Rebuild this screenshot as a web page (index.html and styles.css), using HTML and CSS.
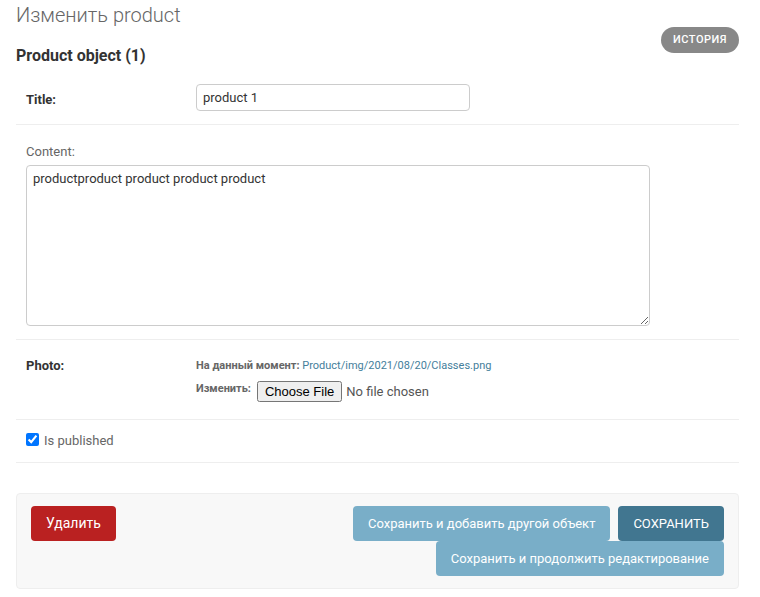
FILE: index.html
```html
<!DOCTYPE html>
<html lang="ru">
<head>
<meta charset="utf-8">
<title>Изменить product</title>
<link rel="stylesheet" href="styles.css">
</head>
<body>
<div class="page">
  <div class="header">
    <div class="titles">
      <h1 class="page-title">Изменить product</h1>
      <h2 class="object-title">Product object (1)</h2>
    </div>
    <a class="history" href="#">История</a>
  </div>

  <form class="change-form">
    <div class="form-row inline">
      <label class="field-label required" for="id_title">Title:</label>
      <input class="text-input" type="text" id="id_title" value="product 1">
    </div>

    <div class="form-row stacked">
      <label class="field-label stacked-label" for="id_content">Content:</label>
      <textarea class="textarea" id="id_content">productproduct product product product</textarea>
    </div>

    <div class="form-row inline">
      <label class="field-label required">Photo:</label>
      <div class="file-upload">
        <div class="file-current">На данный момент: <a class="file-link" href="#">Product/img/2021/08/20/Classes.png</a></div>
        <div class="file-change">
          <span class="file-change-label">Изменить:</span>
          <input class="file-input" type="file">
        </div>
      </div>
    </div>

    <div class="form-row check-row">
      <input class="checkbox" type="checkbox" id="id_pub" checked>
      <label class="check-label" for="id_pub">Is published</label>
    </div>

    <div class="submit-row">
      <a class="btn btn-delete" href="#">Удалить</a>
      <div class="save-buttons">
        <button class="btn btn-default" type="button">СОХРАНИТЬ</button>
        <button class="btn btn-light" type="button">Сохранить и добавить другой объект</button>
        <button class="btn btn-light" type="button">Сохранить и продолжить редактирование</button>
      </div>
    </div>
  </form>
</div>
</body>
</html>
```
FILE: styles.css
```css
* { box-sizing: border-box; }

body {
  margin: 0;
  font-family: Roboto, "Liberation Sans", sans-serif;
  color: #333;
  background: #fff;
}

.page {
  padding: 0 21px 0 16px;
}

.header {
  display: flex;
  justify-content: space-between;
  align-items: flex-start;
}

.page-title {
  margin: 0;
  font-size: 20px;
  line-height: 30px;
  font-weight: 300;
  color: #666;
}

.object-title {
  margin: 16px 0 9px;
  font-size: 16px;
  line-height: 19px;
  font-weight: 700;
  color: #333;
}

.history {
  margin-top: 27px;
  display: block;
  padding: 3px 12px;
  line-height: 20px;
  font-size: 11px;
  font-weight: 500;
  letter-spacing: 0.5px;
  text-transform: uppercase;
  color: #fff;
  background: #888;
  border-radius: 15px;
  text-decoration: none;
}

.form-row {
  padding: 10px;
  border-bottom: 1px solid #eee;
  font-size: 13px;
}

.inline {
  display: flex;
  align-items: flex-start;
}

.field-label {
  width: 170px;
  flex: none;
  padding: 8px 10px 0 0;
  line-height: 15px;
  color: #666;
}

.required {
  font-weight: 700;
  color: #333;
}

.text-input {
  width: 274px;
  height: 27px;
  margin: 0 0 3px;
  padding: 5px 6px;
  border: 1px solid #ccc;
  border-radius: 4px;
  font-family: Roboto, "Liberation Sans", sans-serif;
  font-size: 13px;
  color: #333;
}

.stacked-label {
  display: block;
  width: auto;
  padding: 9px 0 6px;
}

.textarea {
  display: block;
  width: 624px;
  height: 161px;
  margin: 0 0 3px;
  padding: 5px 6px;
  border: 1px solid #ccc;
  border-radius: 4px;
  font-family: Roboto, "Liberation Sans", sans-serif;
  font-size: 13px;
  line-height: 15px;
  color: #333;
  resize: both;
}

.file-upload {
  padding: 6px 0 5px;
  font-size: 11px;
  color: #666;
}

.file-current {
  line-height: 20px;
  font-weight: 700;
}

.file-link {
  font-weight: 400;
  color: #447e9b;
  text-decoration: none;
}

.file-change {
  display: flex;
  align-items: flex-start;
}

.file-change-label {
  padding-top: 3px;
  line-height: 20px;
  font-weight: 700;
  margin-right: 4px;
}

.file-input {
  margin: 3px 0 0;
  padding: 2px 3px 2px 2px;
  font-family: Roboto, "Liberation Sans", sans-serif;
  font-size: 13px;
  color: #555;
}

.check-row {
  display: flex;
  align-items: flex-start;
  padding-bottom: 11px;
}

.checkbox {
  width: 13px;
  height: 13px;
  margin: 3px 5px 0 0;
}

.check-label {
  line-height: 21px;
  color: #666;
}

.submit-row {
  margin-top: 30px;
  display: flex;
  align-items: flex-start;
  padding: 12px 14px;
  background: #f8f8f8;
  border: 1px solid #eee;
  border-radius: 4px;
}

.save-buttons {
  flex: 1;
  display: flex;
  flex-direction: row-reverse;
  flex-wrap: wrap;
  column-gap: 8px;
  margin-left: 20px;
}

.btn {
  display: block;
  height: 35px;
  padding: 10px 15px;
  line-height: 15px;
  font-family: Roboto, "Liberation Sans", sans-serif;
  font-size: 13px;
  color: #fff;
  border: none;
  border-radius: 4px;
  text-decoration: none;
  white-space: nowrap;
}

.btn-delete {
  background: #ba2121;
  font-size: 14px;
}
.btn-default { background: #417690; }
.btn-light { background: #79aec8; }
```
